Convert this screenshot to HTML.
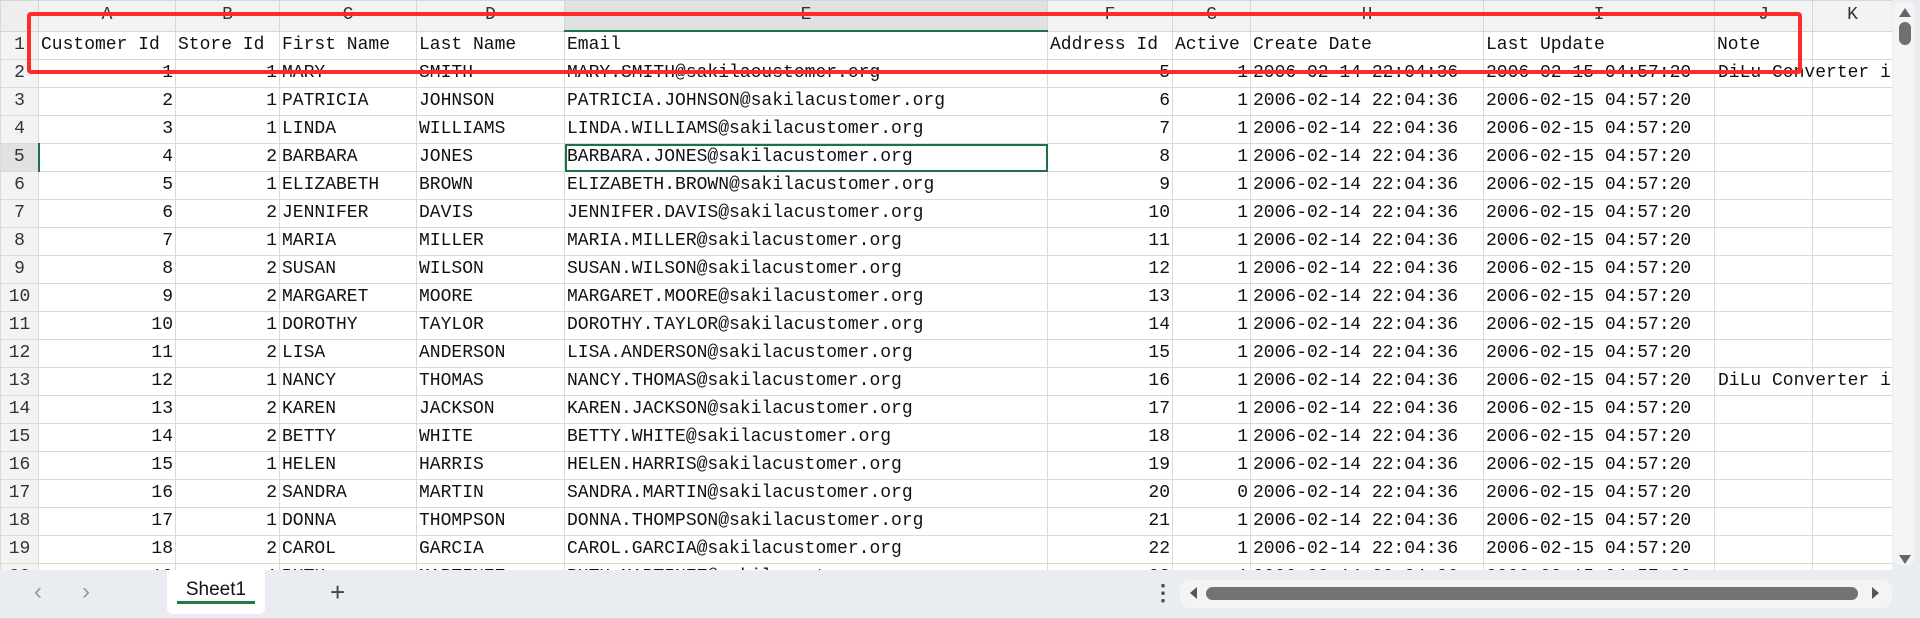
<!DOCTYPE html>
<html><head><meta charset="utf-8"><style>
body{margin:0;width:1920px;height:618px;overflow:hidden;background:#e9ecf1;font-family:"Liberation Mono","Noto Sans CJK SC",monospace;}
#grid{position:absolute;left:0;top:0;width:1892px;height:570px;overflow:hidden;background:#fff;}
table{border-collapse:collapse;table-layout:fixed;width:1892px;}
td{border:1px solid #dadada;height:27px;padding:0 2px;font-size:18px;color:#111;white-space:nowrap;overflow:visible;line-height:27px;}
tr.h td{background:#f3f3f3;height:29px;text-align:center;color:#333;border-color:#d6d6d6;}
td.rn{background:#f3f3f3;text-align:center;color:#333;padding:0;}
td.r{text-align:right;}
td.ov{overflow:visible;position:relative;}
td.ov span{position:absolute;left:3px;top:0;}
td.sel{outline:2px solid #1e7145;outline-offset:-2px;}
#red{position:absolute;left:27px;top:12px;width:1767px;height:54px;border:4px solid #ff2a2a;border-radius:4px;}
#vs{position:absolute;left:1893px;top:2px;width:22px;height:563px;background:#f4f4f4;border-radius:8px;}
#vt{position:absolute;left:1899px;top:22px;width:12px;height:23px;background:#6f6f6f;border-radius:6px;}
.tri{position:absolute;width:0;height:0;border-left:6px solid transparent;border-right:6px solid transparent;}
#hs{position:absolute;left:1180px;top:580px;width:712px;height:28px;background:#f4f4f4;border-radius:10px;}
#ht{position:absolute;left:1206px;top:587px;width:652px;height:13px;background:#737373;border-radius:7px;}
#tab{position:absolute;left:167px;top:570px;width:98px;height:44px;background:#fff;border-radius:0 0 6px 6px;text-align:center;font-family:"Liberation Sans",sans-serif;font-size:19px;line-height:40px;color:#111;}
#tab div{position:absolute;left:10px;bottom:10px;width:78px;height:3px;background:#1e7c45;}
</style></head><body>
<div id="grid"><table>
<colgroup><col style="width:38px"><col style="width:137px"><col style="width:104px"><col style="width:137px"><col style="width:148px"><col style="width:483px"><col style="width:125px"><col style="width:78px"><col style="width:233px"><col style="width:231px"><col style="width:98px"><col style="width:80px"></colgroup>
<tr class="h"><td style="background:#eee"></td><td>A</td><td>B</td><td>C</td><td>D</td><td style="background:#e1e1e1;border-bottom:2px solid #1e7145">E</td><td>F</td><td>G</td><td>H</td><td>I</td><td>J</td><td>K</td></tr>
<tr><td class="rn">1</td><td>Customer Id</td><td>Store Id</td><td>First Name</td><td>Last Name</td><td>Email</td><td>Address Id</td><td>Active</td><td>Create Date</td><td>Last Update</td><td>Note</td><td></td></tr>
<tr><td class="rn">2</td><td class="r">1</td><td class="r">1</td><td>MARY</td><td>SMITH</td><td>MARY.SMITH@sakilacustomer.org</td><td class="r">5</td><td class="r">1</td><td>2006-02-14 22:04:36</td><td>2006-02-15 04:57:20</td><td class="ov"><span>DiLu Converter i</span></td><td></td></tr>
<tr><td class="rn">3</td><td class="r">2</td><td class="r">1</td><td>PATRICIA</td><td>JOHNSON</td><td>PATRICIA.JOHNSON@sakilacustomer.org</td><td class="r">6</td><td class="r">1</td><td>2006-02-14 22:04:36</td><td>2006-02-15 04:57:20</td><td></td><td></td></tr>
<tr><td class="rn">4</td><td class="r">3</td><td class="r">1</td><td>LINDA</td><td>WILLIAMS</td><td>LINDA.WILLIAMS@sakilacustomer.org</td><td class="r">7</td><td class="r">1</td><td>2006-02-14 22:04:36</td><td>2006-02-15 04:57:20</td><td></td><td></td></tr>
<tr><td class="rn" style="background:#e1e1e1;border-right:2px solid #1e7145">5</td><td class="r">4</td><td class="r">2</td><td>BARBARA</td><td>JONES</td><td class="sel">BARBARA.JONES@sakilacustomer.org</td><td class="r">8</td><td class="r">1</td><td>2006-02-14 22:04:36</td><td>2006-02-15 04:57:20</td><td></td><td></td></tr>
<tr><td class="rn">6</td><td class="r">5</td><td class="r">1</td><td>ELIZABETH</td><td>BROWN</td><td>ELIZABETH.BROWN@sakilacustomer.org</td><td class="r">9</td><td class="r">1</td><td>2006-02-14 22:04:36</td><td>2006-02-15 04:57:20</td><td></td><td></td></tr>
<tr><td class="rn">7</td><td class="r">6</td><td class="r">2</td><td>JENNIFER</td><td>DAVIS</td><td>JENNIFER.DAVIS@sakilacustomer.org</td><td class="r">10</td><td class="r">1</td><td>2006-02-14 22:04:36</td><td>2006-02-15 04:57:20</td><td></td><td></td></tr>
<tr><td class="rn">8</td><td class="r">7</td><td class="r">1</td><td>MARIA</td><td>MILLER</td><td>MARIA.MILLER@sakilacustomer.org</td><td class="r">11</td><td class="r">1</td><td>2006-02-14 22:04:36</td><td>2006-02-15 04:57:20</td><td></td><td></td></tr>
<tr><td class="rn">9</td><td class="r">8</td><td class="r">2</td><td>SUSAN</td><td>WILSON</td><td>SUSAN.WILSON@sakilacustomer.org</td><td class="r">12</td><td class="r">1</td><td>2006-02-14 22:04:36</td><td>2006-02-15 04:57:20</td><td></td><td></td></tr>
<tr><td class="rn">10</td><td class="r">9</td><td class="r">2</td><td>MARGARET</td><td>MOORE</td><td>MARGARET.MOORE@sakilacustomer.org</td><td class="r">13</td><td class="r">1</td><td>2006-02-14 22:04:36</td><td>2006-02-15 04:57:20</td><td></td><td></td></tr>
<tr><td class="rn">11</td><td class="r">10</td><td class="r">1</td><td>DOROTHY</td><td>TAYLOR</td><td>DOROTHY.TAYLOR@sakilacustomer.org</td><td class="r">14</td><td class="r">1</td><td>2006-02-14 22:04:36</td><td>2006-02-15 04:57:20</td><td></td><td></td></tr>
<tr><td class="rn">12</td><td class="r">11</td><td class="r">2</td><td>LISA</td><td>ANDERSON</td><td>LISA.ANDERSON@sakilacustomer.org</td><td class="r">15</td><td class="r">1</td><td>2006-02-14 22:04:36</td><td>2006-02-15 04:57:20</td><td></td><td></td></tr>
<tr><td class="rn">13</td><td class="r">12</td><td class="r">1</td><td>NANCY</td><td>THOMAS</td><td>NANCY.THOMAS@sakilacustomer.org</td><td class="r">16</td><td class="r">1</td><td>2006-02-14 22:04:36</td><td>2006-02-15 04:57:20</td><td class="ov"><span>DiLu Converter i</span></td><td></td></tr>
<tr><td class="rn">14</td><td class="r">13</td><td class="r">2</td><td>KAREN</td><td>JACKSON</td><td>KAREN.JACKSON@sakilacustomer.org</td><td class="r">17</td><td class="r">1</td><td>2006-02-14 22:04:36</td><td>2006-02-15 04:57:20</td><td></td><td></td></tr>
<tr><td class="rn">15</td><td class="r">14</td><td class="r">2</td><td>BETTY</td><td>WHITE</td><td>BETTY.WHITE@sakilacustomer.org</td><td class="r">18</td><td class="r">1</td><td>2006-02-14 22:04:36</td><td>2006-02-15 04:57:20</td><td></td><td></td></tr>
<tr><td class="rn">16</td><td class="r">15</td><td class="r">1</td><td>HELEN</td><td>HARRIS</td><td>HELEN.HARRIS@sakilacustomer.org</td><td class="r">19</td><td class="r">1</td><td>2006-02-14 22:04:36</td><td>2006-02-15 04:57:20</td><td></td><td></td></tr>
<tr><td class="rn">17</td><td class="r">16</td><td class="r">2</td><td>SANDRA</td><td>MARTIN</td><td>SANDRA.MARTIN@sakilacustomer.org</td><td class="r">20</td><td class="r">0</td><td>2006-02-14 22:04:36</td><td>2006-02-15 04:57:20</td><td></td><td></td></tr>
<tr><td class="rn">18</td><td class="r">17</td><td class="r">1</td><td>DONNA</td><td>THOMPSON</td><td>DONNA.THOMPSON@sakilacustomer.org</td><td class="r">21</td><td class="r">1</td><td>2006-02-14 22:04:36</td><td>2006-02-15 04:57:20</td><td></td><td></td></tr>
<tr><td class="rn">19</td><td class="r">18</td><td class="r">2</td><td>CAROL</td><td>GARCIA</td><td>CAROL.GARCIA@sakilacustomer.org</td><td class="r">22</td><td class="r">1</td><td>2006-02-14 22:04:36</td><td>2006-02-15 04:57:20</td><td></td><td></td></tr>
<tr><td class="rn">20</td><td class="r">19</td><td class="r">1</td><td>RUTH</td><td>MARTINEZ</td><td>RUTH.MARTINEZ@sakilacustomer.org</td><td class="r">23</td><td class="r">1</td><td>2006-02-14 22:04:36</td><td>2006-02-15 04:57:20</td><td></td><td></td></tr>
</table></div>
<div id="red"></div>
<div id="vs"></div><div id="vt"></div>
<div class="tri" style="left:1899px;top:8px;border-bottom:9px solid #666"></div>
<div class="tri" style="left:1899px;top:555px;border-top:9px solid #666"></div>
<div style="position:absolute;left:34px;top:578px;font-size:24px;color:#999;font-family:'Liberation Sans',sans-serif">&#x2039;</div>
<div style="position:absolute;left:82px;top:578px;font-size:24px;color:#999;font-family:'Liberation Sans',sans-serif">&#x203A;</div>
<div id="tab">Sheet1<div></div></div>
<div style="position:absolute;left:330px;top:577px;font-size:26px;color:#444;font-family:'Liberation Sans',sans-serif">+</div>
<div style="position:absolute;left:1152px;top:580px;font-size:22px;color:#444;font-family:'Liberation Sans',sans-serif;font-weight:bold">&#x22EE;</div>
<div id="hs"></div><div id="ht"></div>
<div style="position:absolute;left:1190px;top:587px;width:0;height:0;border-top:6px solid transparent;border-bottom:6px solid transparent;border-right:7px solid #555"></div>
<div style="position:absolute;left:1872px;top:587px;width:0;height:0;border-top:6px solid transparent;border-bottom:6px solid transparent;border-left:7px solid #555"></div>
</body></html>
